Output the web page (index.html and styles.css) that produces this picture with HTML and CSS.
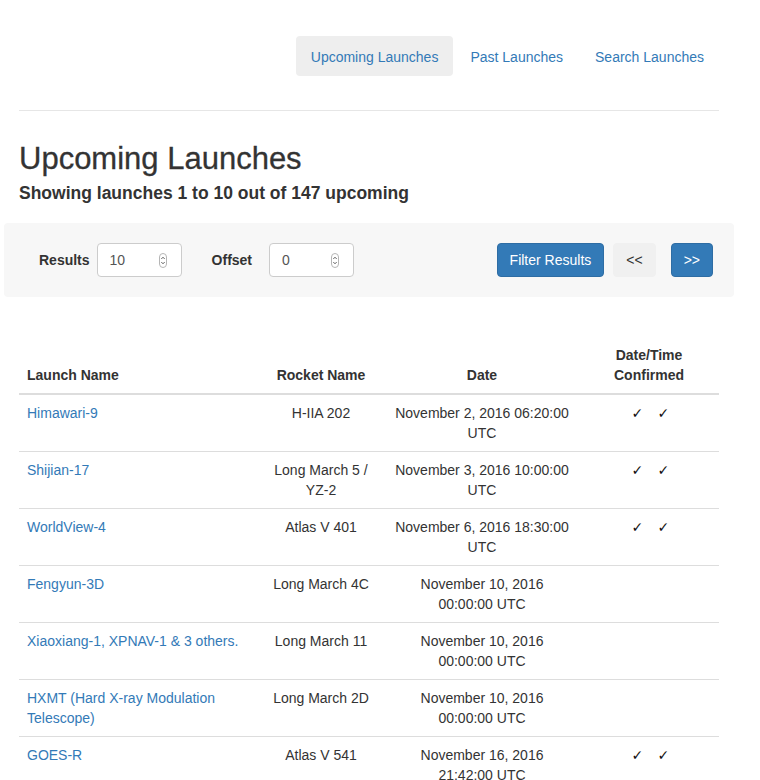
FILE: index.html
```html
<!DOCTYPE html>
<html lang="en">
<head>
<meta charset="utf-8">
<title>Upcoming Launches</title>
<link rel="stylesheet" href="styles.css">
</head>
<body>
<div class="page">
  <div class="inner">
    <nav class="nav">
      <a class="pill active" href="#">Upcoming Launches</a>
      <a class="pill" href="#">Past Launches</a>
      <a class="pill" href="#">Search Launches</a>
    </nav>
    <hr class="rule">
    <h1 class="title">Upcoming Launches</h1>
    <h4 class="subtitle">Showing launches 1 to 10 out of 147 upcoming</h4>
  </div>
  <form class="well">
    <div class="fields">
      <label class="lbl">Results</label>
      <div class="num">
        <span class="num-val">10</span>
        <svg class="spin" width="8" height="15" viewBox="0 0 8 15"><rect x="0.5" y="0.5" width="7" height="14" rx="3.5" fill="#fff" stroke="#b5b5b5"/><path d="M2.3 6 L4 4.2 L5.7 6" fill="none" stroke="#555" stroke-width="0.9"/><path d="M2.3 9 L4 10.8 L5.7 9" fill="none" stroke="#555" stroke-width="0.9"/></svg>
      </div>
      <label class="lbl lbl-2">Offset</label>
      <div class="num">
        <span class="num-val">0</span>
        <svg class="spin" width="8" height="15" viewBox="0 0 8 15"><rect x="0.5" y="0.5" width="7" height="14" rx="3.5" fill="#fff" stroke="#b5b5b5"/><path d="M2.3 6 L4 4.2 L5.7 6" fill="none" stroke="#555" stroke-width="0.9"/><path d="M2.3 9 L4 10.8 L5.7 9" fill="none" stroke="#555" stroke-width="0.9"/></svg>
      </div>
    </div>
    <div class="actions">
      <button type="button" class="btn btn-primary">Filter Results</button>
      <button type="button" class="btn btn-default">&lt;&lt;</button>
      <button type="button" class="btn btn-primary btn-next">&gt;&gt;</button>
    </div>
  </form>
  <div class="inner">
    <table class="table">
      <colgroup>
        <col class="c1"><col class="c2"><col class="c3"><col class="c4">
      </colgroup>
      <thead>
        <tr>
          <th class="left">Launch Name</th>
          <th>Rocket Name</th>
          <th>Date</th>
          <th>Date/Time Confirmed</th>
        </tr>
      </thead>
      <tbody>
        <tr>
          <td class="left"><a href="#">Himawari-9</a></td>
          <td>H-IIA 202</td>
          <td>November 2, 2016 06:20:00 UTC</td>
          <td><span class="checks"><span>✓</span><span>✓</span></span></td>
        </tr>
        <tr>
          <td class="left"><a href="#">Shijian-17</a></td>
          <td>Long March 5 / YZ-2</td>
          <td>November 3, 2016 10:00:00 UTC</td>
          <td><span class="checks"><span>✓</span><span>✓</span></span></td>
        </tr>
        <tr>
          <td class="left"><a href="#">WorldView-4</a></td>
          <td>Atlas V 401</td>
          <td>November 6, 2016 18:30:00 UTC</td>
          <td><span class="checks"><span>✓</span><span>✓</span></span></td>
        </tr>
        <tr>
          <td class="left"><a href="#">Fengyun-3D</a></td>
          <td>Long March 4C</td>
          <td>November 10, 2016 00:00:00 UTC</td>
          <td></td>
        </tr>
        <tr>
          <td class="left"><a href="#">Xiaoxiang-1, XPNAV-1 &amp; 3 others.</a></td>
          <td>Long March 11</td>
          <td>November 10, 2016 00:00:00 UTC</td>
          <td></td>
        </tr>
        <tr>
          <td class="left"><a href="#">HXMT (Hard X-ray Modulation Telescope)</a></td>
          <td>Long March 2D</td>
          <td>November 10, 2016 00:00:00 UTC</td>
          <td></td>
        </tr>
        <tr>
          <td class="left"><a href="#">GOES-R</a></td>
          <td>Atlas V 541</td>
          <td>November 16, 2016 21:42:00 UTC</td>
          <td><span class="checks"><span>✓</span><span>✓</span></span></td>
        </tr>
        <tr>
          <td class="left"><a href="#">Star One D1 &amp; JCSAT-15</a></td>
          <td>Ariane 5 ECA</td>
          <td>November 21, 2016 21:00:00 UTC</td>
          <td></td>
        </tr>
        <tr>
          <td class="left"><a href="#">Iridium NEXT 1-10</a></td>
          <td>Falcon 9 Full Thrust</td>
          <td>December 16, 2016 20:36:00 UTC</td>
          <td></td>
        </tr>
        <tr>
          <td class="left"><a href="#">WGS-8</a></td>
          <td>Delta IV M+(5,4)</td>
          <td>December 7, 2016 23:53:00 UTC</td>
          <td></td>
        </tr>
      </tbody>
    </table>
  </div>
</div>
</body>
</html>
```

FILE: styles.css
```css
* { box-sizing: border-box; }

html, body {
  margin: 0;
  padding: 0;
  background: #fff;
}

body {
  font-family: "Liberation Sans", Arial, sans-serif;
  font-size: 14px;
  line-height: 20px;
  color: #333;
}

a { color: #337ab7; text-decoration: none; }

.page {
  width: 730px;
  margin-left: 4px;
}

.inner {
  padding: 0 15px;
}

.nav {
  display: flex;
  justify-content: flex-end;
  gap: 2px;
  padding-top: 36px;
}

.pill {
  display: block;
  padding: 11px 15px 9px;
  line-height: 20px;
  border-radius: 4px;
  color: #337ab7;
}

.pill.active {
  background: #eee;
}

.rule {
  margin: 34px 0 0;
  border: 0;
  border-top: 1px solid #e6e6e6;
  height: 0;
}

.title {
  margin: 31px 0 0;
  font-size: 31px;
  line-height: 34px;
  font-weight: 500;
  color: #333;
  -webkit-text-stroke: 0.3px #333;
}

.subtitle {
  margin: 7px 0 0;
  font-size: 17.5px;
  line-height: 20px;
  font-weight: bold;
  color: #333;
}

.well {
  margin: 20px 0 0;
  display: flex;
  align-items: center;
  justify-content: space-between;
  padding: 20px 21px 20px 35px;
  background: #f7f7f7;
  border-radius: 4px;
}

.fields {
  display: flex;
  align-items: center;
}

.lbl {
  font-weight: bold;
  margin-right: 7px;
}

.lbl-2 {
  margin-left: 30px;
  margin-right: 17px;
}

.num {
  width: 85px;
  height: 34px;
  border: 1px solid #ccc;
  border-radius: 4px;
  background: #fff;
  display: flex;
  align-items: center;
  justify-content: space-between;
  padding: 0 14px 0 12px;
  color: #555;
}

.spin { display: block; }

.actions {
  display: flex;
  align-items: center;
  gap: 9px;
}

.btn {
  font-family: inherit;
  font-size: 14px;
  line-height: 20px;
  height: 34px;
  padding: 6px 12px;
  border-radius: 4px;
  border: 1px solid transparent;
  cursor: pointer;
}

.btn-primary {
  background: #337ab7;
  border-color: #2e6da4;
  color: #fff;
}

.btn-default {
  background: #f0f0f0;
  border-color: #f0f0f0;
  color: #333;
}

.btn-next {
  margin-left: 6px;
}

.table {
  width: 100%;
  margin-top: 40px;
  border-collapse: collapse;
  table-layout: fixed;
}

.c1 { width: 238px; }
.c2 { width: 128px; }
.c3 { width: 194px; }
.c4 { width: 140px; }

.table th,
.table td {
  padding: 8px;
  text-align: center;
  line-height: 20px;
}

.table th {
  vertical-align: bottom;
  font-weight: bold;
  border-bottom: 2px solid #ddd;
}

.table td {
  vertical-align: top;
  border-top: 1px solid #ddd;
}

.table .left { text-align: left; }

.checks {
  display: inline-flex;
  gap: 17px;
  font-family: "DejaVu Sans", sans-serif;
  font-size: 14px;
  font-weight: bold;
  color: #111;
}

.checks span {
  display: inline-block;
  width: 9px;
  text-align: center;
}
```
